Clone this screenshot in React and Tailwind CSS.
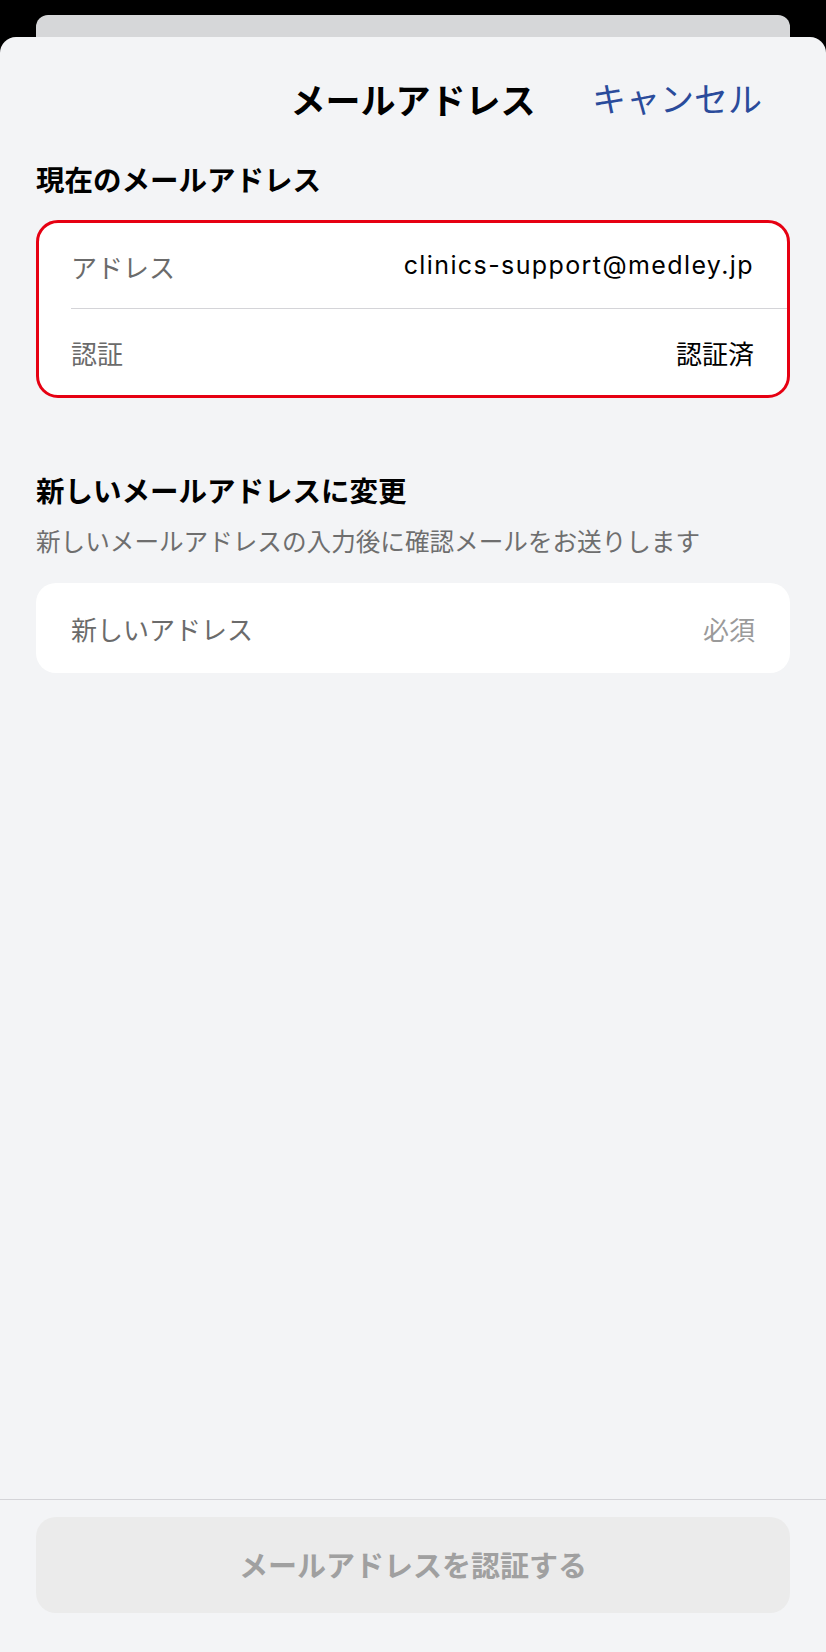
import React from 'react';

const font = { fontFamily: '"Noto Sans CJK JP", "Noto Sans", sans-serif' };
const latin = { fontFamily: 'Inter, "Noto Sans CJK JP", sans-serif' };

const InfoRow = ({ label, value, divider, latinValue }) => (
  <div className="relative flex items-center justify-between pl-[32px] pr-[33px] h-[86px]">
    <span className="text-[26px] text-[#6b6b6b]">{label}</span>
    {latinValue ? (
      <span className="text-[25px] tracking-[1.4px] text-black" style={latin}>{value}</span>
    ) : (
      <span className="text-[26px] text-black">{value}</span>
    )}
    {divider && <div className="absolute bottom-0 left-[32px] right-0 h-px bg-[#d4d4d8]"></div>}
  </div>
);

function App() {
  return (
    <div className="w-[826px] h-[1652px] bg-black flex flex-col" style={font}>
      {/* sheet stacked behind */}
      <div className="mx-[36px] mt-[15px] h-[22px] bg-[#d6d7d9] rounded-t-[12px]"></div>

      <div className="flex-1 flex flex-col bg-[#f3f4f6] rounded-t-[16px]">
        {/* Header */}
        <div className="grid grid-cols-[1fr_auto_1fr] items-center h-[122px]">
          <div></div>
          <h1 className="text-[35px] font-bold text-black leading-none">メールアドレス</h1>
          <button className="justify-self-end pr-[64px] text-[34px] text-[#2a4b9b] leading-none">キャンセル</button>
        </div>

        {/* Current address */}
        <h2 className="px-[36px] text-[28.5px] font-bold text-black leading-[40px]">現在のメールアドレス</h2>
        <div className="mx-[36px] mt-[21px] bg-white border-[3px] border-[#e60012] rounded-[22px] overflow-hidden">
          <InfoRow label="アドレス" value="clinics-support@medley.jp" divider latinValue />
          <InfoRow label="認証" value="認証済" />
        </div>

        {/* New address */}
        <h2 className="mt-[72px] px-[36px] text-[28.5px] font-bold text-black leading-[40px]">新しいメールアドレスに変更</h2>
        <p className="mt-[13px] px-[36px] text-[24.6px] text-[#6e6e6e] leading-[34px]">
          新しいメールアドレスの入力後に確認メールをお送りします
        </p>
        <div className="mx-[36px] mt-[26px] h-[90px] bg-white rounded-[20px] flex items-center justify-between px-[35px]">
          <span className="text-[26px] text-[#6b6b6b]">新しいアドレス</span>
          <span className="text-[26px] text-[#9a9a9a]">必須</span>
        </div>

        <div className="flex-1"></div>

        {/* Footer */}
        <div className="border-t border-[#d4d4d8] pt-[17px] pb-[39px] px-[36px]">
          <button className="w-full h-[96px] bg-[#ebebeb] rounded-[20px] text-[29px] font-bold text-[#a0a0a0]">
            メールアドレスを認証する
          </button>
        </div>
      </div>
    </div>
  );
}

export default App;
